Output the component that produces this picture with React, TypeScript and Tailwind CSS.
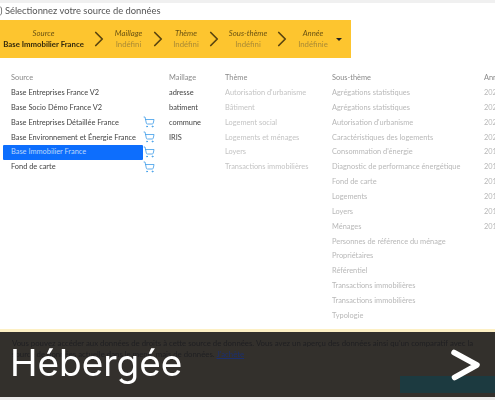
import React from 'react';
import { ShoppingCart, ChevronRight } from 'lucide-react';

const steps = [
  { title: 'Source', value: 'Base Immobilier France', width: 'w-[81px] mr-[6px]', strong: true },
  { title: 'Maillage', value: 'Indéfini', width: 'w-[41px]', strong: false },
  { title: 'Thème', value: 'Indéfini', width: 'w-[38px]', strong: false },
  { title: 'Sous-thème', value: 'Indéfini', width: 'w-[50px]', strong: false },
  { title: 'Année', value: 'Indéfinie', width: 'w-[44px]', strong: false },
];

const sources = [
  { name: 'Base Entreprises France V2', cart: false },
  { name: 'Base Socio Démo France V2', cart: false },
  { name: 'Base Entreprises Détaillée France', cart: true },
  { name: 'Base Environnement et Énergie France', cart: true },
  { name: 'Base Immobilier France', cart: true, selected: true },
  { name: 'Fond de carte', cart: true },
];

const maillages = ['adresse', 'batiment', 'commune', 'IRIS'];
const themes = ["Autorisation d'urbanisme", 'Bâtiment', 'Logement social', 'Logements et ménages', 'Loyers', 'Transactions immobilières'];
const sousThemes = [
  'Agrégations statistiques',
  'Agrégations statistiques',
  "Autorisation d'urbanisme",
  'Caractéristiques des logements',
  "Consommation d'énergie",
  'Diagnostic de performance énergétique',
  'Fond de carte',
  'Logements',
  'Loyers',
  'Ménages',
  'Personnes de référence du ménage',
  'Propriétaires',
  'Référentiel',
  'Transactions immobilières',
  'Transactions immobilières',
  'Typologie',
];
const annees = ['2023', '2022', '2021', '2020', '2019', '2018', '2017', '2016', '2015', '2014'];

function Column({ title, items, className, itemClass }: { title: string; items: string[]; className: string; itemClass: string }) {
  return (
    <div className={className}>
      <div className="h-[15px] text-[#8a8a8a] leading-[15px]">{title}</div>
      <div className="mt-[1px]">
        {items.map((item, i) => (
          <div key={i} className={`h-[14.87px] leading-[14.87px] whitespace-nowrap ${itemClass}`}>{item}</div>
        ))}
      </div>
    </div>
  );
}

export default function App() {
  return (
    <div className="relative w-[495px] h-[400px] overflow-hidden bg-white flex flex-col font-['Lato',sans-serif]">
      <div className="h-[3px] bg-[#f0f0f0]" />
      <div className="h-[17px] text-[9.4px] leading-[15px] text-[#555] whitespace-nowrap blur-[0.3px]">) Sélectionnez votre source de données</div>

      {/* stepper */}
      <div className="w-[351px] h-[38px] bg-[#fdc52f] flex items-center pl-[3px] blur-[0.3px]">
        {steps.map((step, i) => (
          <React.Fragment key={step.title}>
            <div className={`${step.width} flex flex-col items-center text-[7.8px] leading-[11px] whitespace-nowrap`}>
              <span className="italic text-[#6b5312]">{step.title}</span>
              <span className={step.strong ? 'font-bold text-[#33290c]' : 'text-[#a98a35]'}>{step.value}</span>
            </div>
            {i < steps.length - 1 && (
              <ChevronRight size={26} strokeWidth={1.6} className="-mx-[4px] shrink-0 text-[#5a4510]" />
            )}
          </React.Fragment>
        ))}
        <div className="ml-[1px] w-0 h-0 border-x-[3px] border-x-transparent border-t-[3px] border-t-[#222]" />
      </div>

      {/* columns */}
      <div className="flex-1 flex pt-[12px] text-[7.4px] overflow-hidden blur-[0.3px]">
        <div className="w-[169px] shrink-0 pl-[3px]">
          <div className="h-[15px] pl-[8px] text-[#8a8a8a] leading-[15px]">Source</div>
          <div className="mt-[1px]">
            {sources.map((s) => (
              <div key={s.name} className="h-[14.87px] flex items-center">
                <div className={`w-[140px] h-full pl-[8px] leading-[14.87px] whitespace-nowrap rounded-[1px] ${s.selected ? 'bg-[#0d6efd] text-[#bcd6fb]' : 'text-[#444]'}`}>
                  {s.name}
                </div>
                {s.cart && <ShoppingCart size={12} strokeWidth={1.6} className="mb-[2px] text-[#3b9ae8]" />}
              </div>
            ))}
          </div>
        </div>
        <Column title="Maillage" items={maillages} className="w-[56px] shrink-0" itemClass="text-[#444]" />
        <Column title="Thème" items={themes} className="w-[107px] shrink-0" itemClass="text-[#c4c4c4]" />
        <Column title="Sous-thème" items={sousThemes} className="w-[152px] shrink-0" itemClass="text-[#b8b8b8]" />
        <Column title="Année" items={annees} className="w-[40px] shrink-0" itemClass="text-[#b8b8b8]" />
      </div>

      {/* footer under the caption */}
      <div className="h-[68px] shrink-0 bg-[#33302c] border-t-[3px] border-t-[#fdf0c4] flex flex-col">
        <div className="pl-[12px] pt-[6px] text-[7.8px] leading-[11px] text-[#1f1f22] whitespace-nowrap blur-[0.4px]">
          <div>Vous pouvez accéder aux données de droits à cette source de données. Vous avez un aperçu des données ainsi qu'un comparatif avec la</div>
          <div>source de données actuelle dans le menu, mais de données. <span className="text-[#1c2f6e] underline">J'achète</span></div>
        </div>
        <div className="mt-auto mb-[4px] ml-auto w-[95px] h-[17px] bg-[#1c3a40]" />
      </div>
      <div className="h-[3px] shrink-0 bg-[#ececec]" />

      {/* caption over the screenshot */}
      <div className="absolute left-[10px] top-[338px] text-[37px] leading-[50px] text-white font-['Inter',sans-serif] blur-[0.3px]">Hébergée</div>
      <svg className="absolute left-[448px] top-[346px]" width="36" height="38" viewBox="0 0 36 38" fill="none">
        <path d="M6 6.5 L29 19 L6.5 31.5" stroke="#ffffff" strokeWidth="5.5" strokeLinecap="round" strokeLinejoin="round" />
      </svg>
    </div>
  );
}
